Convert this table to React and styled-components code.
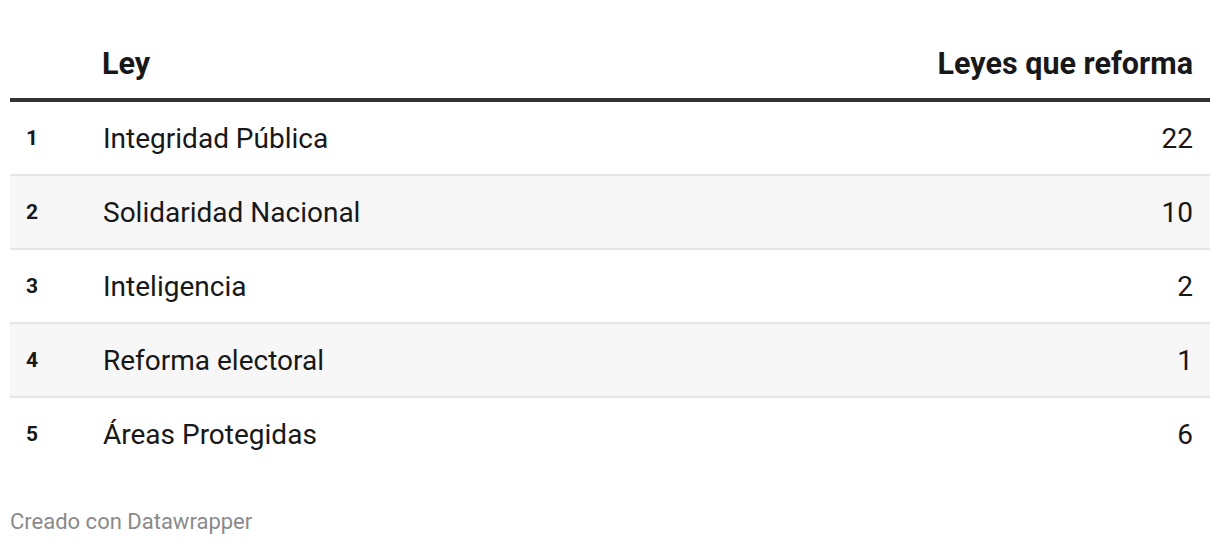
import React from "react";
import styled, { createGlobalStyle } from "styled-components";

const Global = createGlobalStyle`
  html, body { margin: 0; padding: 0; background: #fff; }
  body { font-family: Roboto, "Liberation Sans", sans-serif; color: #181818; }
`;

const Wrap = styled.div`
  padding: 0 10px;
  width: 1220px;
  box-sizing: border-box;
`;

const Table = styled.table`
  width: 100%;
  border-collapse: collapse;
  margin-top: 38px;
`;

const HeadCell = styled.th`
  font-size: 30.5px;
  font-weight: 700;
  color: #181818;
  text-align: ${(p) => (p.$right ? "right" : "left")};
  padding: 0 ${(p) => (p.$right ? "17px" : "0")} 17px 0;
  border-bottom: 4px solid #333;
  height: 62px;
  box-sizing: border-box;
  line-height: 34px;
  vertical-align: bottom;
  width: ${(p) => p.$w || "auto"};
`;

const Row = styled.tr`
  background: ${(p) => (p.$striped ? "#f7f7f7" : "#fff")};
  border-bottom: ${(p) => (p.$last ? "none" : "2px solid #e6e6e6")};
`;

const RankCell = styled.td`
  font-size: 21px;
  font-weight: 700;
  padding: 0 0 0 16px;
  height: 72px;
  color: #181818;
`;

const NameCell = styled.td`
  font-size: 28px;
  color: #181818;
`;

const ValueCell = styled.td`
  font-size: 28px;
  text-align: right;
  padding-right: 17px;
  color: #181818;
`;

const Footer = styled.div`
  margin-top: 39px;
  font-size: 22px;
  color: #8a8a8a;
`;

const data = [
  ["Integridad Pública", 22],
  ["Solidaridad Nacional", 10],
  ["Inteligencia", 2],
  ["Reforma electoral", 1],
  ["Áreas Protegidas", 6],
];

export default function App() {
  return (
    <Wrap>
      <Global />
      <Table>
        <thead>
          <tr>
            <HeadCell $w="92px"></HeadCell>
            <HeadCell>Ley</HeadCell>
            <HeadCell $right>Leyes que reforma</HeadCell>
          </tr>
        </thead>
        <tbody>
          {data.map(([name, v], i) => (
            <Row key={name} $striped={i % 2 === 1} $last={i === data.length - 1}>
              <RankCell>{i + 1}</RankCell>
              <NameCell>{name}</NameCell>
              <ValueCell>{v}</ValueCell>
            </Row>
          ))}
        </tbody>
      </Table>
      <Footer>Creado con Datawrapper</Footer>
    </Wrap>
  );
}
